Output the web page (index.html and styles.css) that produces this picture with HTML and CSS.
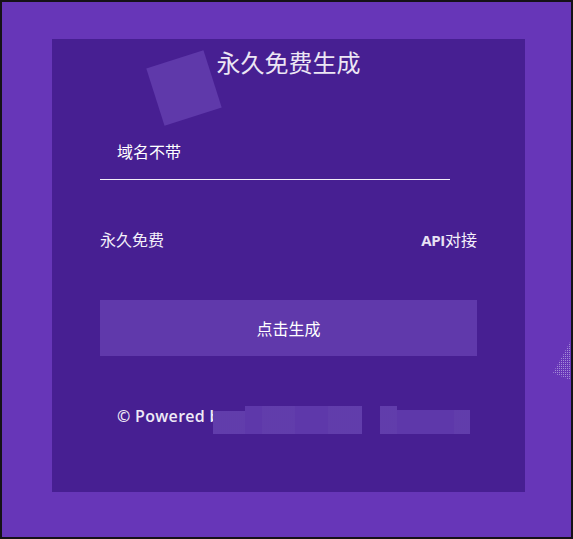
FILE: index.html
```html
<!DOCTYPE html>
<html lang="zh-CN">
<head>
<meta charset="utf-8">
<title>永久免费生成</title>
<link rel="stylesheet" href="styles.css">
</head>
<body>
<div class="frame">
  <div class="card">
    <div class="deco-square"></div>
    <h1 class="title">永久免费生成</h1>
    <div class="field">
      <input class="field-input" type="text" placeholder="域名不带">
    </div>
    <div class="links">
      <span class="link">永久免费</span>
      <span class="link"><span class="latin">API</span>对接</span>
    </div>
    <button class="submit" type="button">点击生成</button>
    <div class="footer">
      <span class="footer-text">© Powered by</span>
      <div class="mosaic">
        <div class="mosaic-group g1">
          <div class="tile t-low dots"></div>
          <div class="tile t-a"></div>
          <div class="tile t-b dots"></div>
          <div class="tile t-c"></div>
          <div class="tile t-d dots"></div>
        </div>
        <div class="mosaic-group g2">
          <div class="tile t-e dots"></div>
          <div class="tile t-f"></div>
          <div class="tile t-g dots"></div>
        </div>
      </div>
    </div>
  </div>
  <svg class="deco-dots" width="18" height="39" viewBox="0 0 18 39">
    <defs>
      <pattern id="dp" width="2" height="2" patternUnits="userSpaceOnUse">
        <rect x="0" y="0" width="1" height="1" fill="#a38ad8"/>
      </pattern>
    </defs>
    <polygon points="17,0 0,31 17,38" fill="url(#dp)"/>
  </svg>
</div>
</body>
</html>
```
FILE: styles.css
```css
* { box-sizing: border-box; }

html, body {
  margin: 0;
  padding: 0;
  background: #151217;
}

body {
  width: 573px;
  height: 539px;
  padding: 2px;
  font-family: "Noto Sans CJK SC", "Noto Sans", sans-serif;
}

.frame {
  position: relative;
  width: 569px;
  height: 535px;
  background: #6736b8;
  padding: 37px 0 0 50px;
}

.card {
  position: relative;
  width: 473px;
  height: 453px;
  background: #471f92;
  padding: 8px 48px 0 48px;
  display: flex;
  flex-direction: column;
}

.deco-square {
  position: absolute;
  left: 102px;
  top: 19px;
  width: 60px;
  height: 60px;
  background: #5f39aa;
  transform: rotate(-17.7deg);
}

.title {
  position: relative;
  margin: 0;
  font-size: 24px;
  line-height: 30px;
  font-weight: 400;
  color: #ece6f4;
  text-align: center;
  font-family: "Noto Sans CJK SC", serif;
}

.field {
  margin-top: 48px;
  width: 350px;
  height: 55px;
  border-bottom: 1px solid #f2eef8;
  display: flex;
  align-items: center;
}

.field-input {
  width: 100%;
  height: 54px;
  border: 0;
  outline: none;
  background: transparent;
  padding: 0 0 3px 17px;
  font-family: "Noto Sans CJK SC", sans-serif;
  font-size: 16px;
  color: #ffffff;
}

.field-input::placeholder {
  color: #ffffff;
  opacity: 1;
}

.links {
  margin-top: 47px;
  height: 24px;
  display: flex;
  justify-content: space-between;
  align-items: center;
}

.link {
  font-size: 16px;
  line-height: 24px;
  color: #f4f0fa;
}

.latin {
  font-family: "Open Sans", sans-serif;
  font-weight: 700;
  font-size: 15px;
  letter-spacing: -0.3px;
  color: #e8e2f4;
}

.submit {
  margin-top: 49px;
  width: 377px;
  height: 56px;
  border: 0;
  background: #6039ab;
  color: #ffffff;
  font-family: "Noto Sans CJK SC", sans-serif;
  font-size: 16px;
  padding: 0;
}

.footer {
  position: relative;
  margin-top: 48px;
  height: 24px;
  padding-left: 17px;
  display: flex;
  align-items: center;
}

.footer-text {
  font-family: "Open Sans", sans-serif;
  font-size: 16px;
  font-weight: 600;
  color: #efeaf7;
  letter-spacing: 0.3px;
}

.mosaic {
  position: absolute;
  left: 113px;
  top: 2px;
  width: 257px;
  height: 28px;
  display: flex;
  gap: 18px;
}

.mosaic-group {
  position: relative;
  height: 28px;
  display: flex;
  align-items: flex-end;
}

.g1 { width: 149px; }
.g2 { width: 90px; }

.tile {
  height: 28px;
  background: #5d37a8;
}

.dots {
  background-color: #55309f;
  background-image: radial-gradient(circle, #6e4bba 0.6px, transparent 0.8px);
  background-size: 2px 2px;
}

.t-low { width: 32px; height: 23px; }
.t-a { width: 17px; background: #5e38aa; }
.t-b { width: 33px; }
.t-c { width: 33px; background: #5e38aa; }
.t-d { width: 34px; }

.t-e { width: 17px; }
.t-f { width: 57px; height: 24px; background: #5e38aa; }
.t-g { width: 16px; height: 24px; }

.deco-dots {
  position: absolute;
  left: 551px;
  top: 340px;
}
```
